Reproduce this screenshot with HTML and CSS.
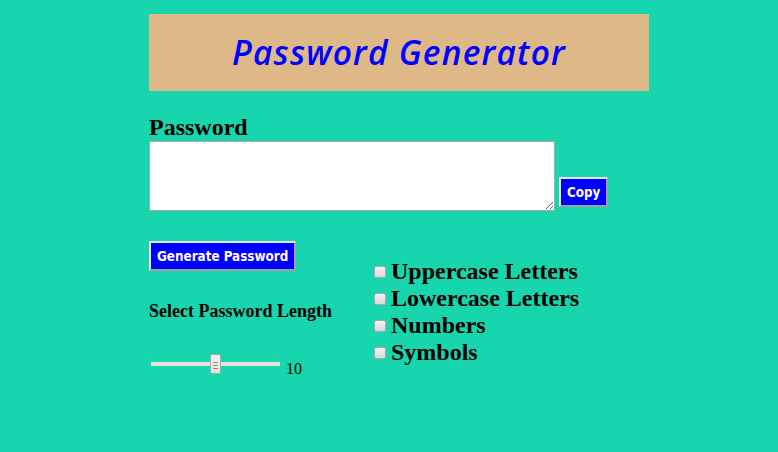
FILE: index.html
```html
<!DOCTYPE html>
<html lang="en">
<head>
<meta charset="utf-8">
<title>Password Generator</title>
<link rel="stylesheet" href="styles.css">
</head>
<body>
<div class="app">
  <div class="header"><h1 class="title">Password Generator</h1></div>
  <h2 class="pw-label">Password</h2>
  <div class="pw-row">
    <textarea class="pw-box"></textarea>
    <button class="btn copy-btn">Copy</button>
  </div>
  <div class="controls">
    <div class="left-col">
      <button class="btn gen-btn">Generate Password</button>
      <h4 class="len-label">Select Password Length</h4>
      <div class="slider-row">
        <input class="slider" type="range" min="4" max="16" value="10">
        <span class="len-value">10</span>
      </div>
    </div>
    <div class="right-col">
      <label class="opt"><input type="checkbox" class="cb"><span>Uppercase Letters</span></label>
      <label class="opt"><input type="checkbox" class="cb"><span>Lowercase Letters</span></label>
      <label class="opt"><input type="checkbox" class="cb"><span>Numbers</span></label>
      <label class="opt"><input type="checkbox" class="cb"><span>Symbols</span></label>
    </div>
  </div>
</div>
</body>
</html>
```
FILE: styles.css
```css
html, body {
  margin: 0;
  padding: 0;
}
body {
  background: #17d5ad;
  font-family: "Liberation Serif", "Times New Roman", serif;
  color: #000;
}
.app {
  width: 480px;
  margin: 0 auto;
  padding-top: 14px;
}
.header {
  width: 500px;
  height: 77px;
  background: #deb887;
  display: flex;
  align-items: center;
  justify-content: center;
}
.title {
  margin: 0;
  font-family: "Open Sans", "DejaVu Sans", sans-serif;
  font-style: italic;
  font-weight: 600;
  font-size: 33.5px;
  letter-spacing: 1.2px;
  color: #0000ff;
  line-height: 1;
}
.pw-label {
  margin: 23px 0 0;
  font-size: 24px;
  font-weight: 700;
  line-height: 27px;
}
.pw-row {
  display: flex;
  align-items: flex-end;
  gap: 4px;
}
.pw-box {
  box-sizing: border-box;
  width: 406px;
  height: 70px;
  margin: 0;
  border: 1px solid #a9a9a9;
  background: #fff;
  padding: 2px;
}
.btn {
  box-sizing: border-box;
  height: 30px;
  padding: 0 6px;
  background: #0000ff;
  color: #fff;
  font-family: "DejaVu Sans Condensed", "DejaVu Sans", sans-serif;
  font-stretch: condensed;
  font-weight: 700;
  font-size: 13.33px;
  border: 2px solid;
  border-color: #e8e8e8 #a0a0a0 #a0a0a0 #e8e8e8;
  cursor: pointer;
}
.copy-btn {
  margin-bottom: 4px;
}
.controls {
  display: flex;
  align-items: flex-start;
}
.left-col {
  width: 221px;
  display: flex;
  flex-direction: column;
  align-items: flex-start;
}
.gen-btn {
  margin-top: 30px;
}
.len-label {
  margin: 30px 0 0;
  font-size: 18px;
  font-weight: 700;
  line-height: 20px;
}
.slider-row {
  display: flex;
  align-items: flex-start;
  margin-top: 33px;
}
.slider {
  -webkit-appearance: none;
  appearance: none;
  width: 129px;
  height: 20px;
  margin: 0 0 0 2px;
  background: transparent;
}
.slider::-webkit-slider-runnable-track {
  height: 4px;
  background: #e4e1dc;
  border: none;
}
.slider::-webkit-slider-thumb {
  -webkit-appearance: none;
  appearance: none;
  box-sizing: border-box;
  width: 11px;
  height: 20px;
  margin-top: -8px;
  border: 1px solid #a5a5a5;
  border-radius: 2px;
  background:
    linear-gradient(#8a8a8a, #8a8a8a) 2px 7px / 5px 1px no-repeat,
    linear-gradient(#8a8a8a, #8a8a8a) 2px 10px / 5px 1px no-repeat,
    linear-gradient(#8a8a8a, #8a8a8a) 2px 13px / 5px 1px no-repeat,
    linear-gradient(#f4f2f0, #e6e3df);
}
.len-value {
  margin-left: 6px;
  margin-top: 6px;
  font-size: 16px;
  line-height: 18px;
}
.right-col {
  margin-top: 47px;
  display: flex;
  flex-direction: column;
}
.opt {
  display: flex;
  align-items: center;
  height: 27px;
  font-size: 24px;
  font-weight: 700;
  line-height: 27px;
}
.cb {
  -webkit-appearance: none;
  appearance: none;
  box-sizing: border-box;
  width: 12px;
  height: 12px;
  margin: 0 5px 0 4px;
  border: 1px solid #a8a8a8;
  border-radius: 2px;
  background: linear-gradient(#f2f2f2, #d9d9d9);
}
```
